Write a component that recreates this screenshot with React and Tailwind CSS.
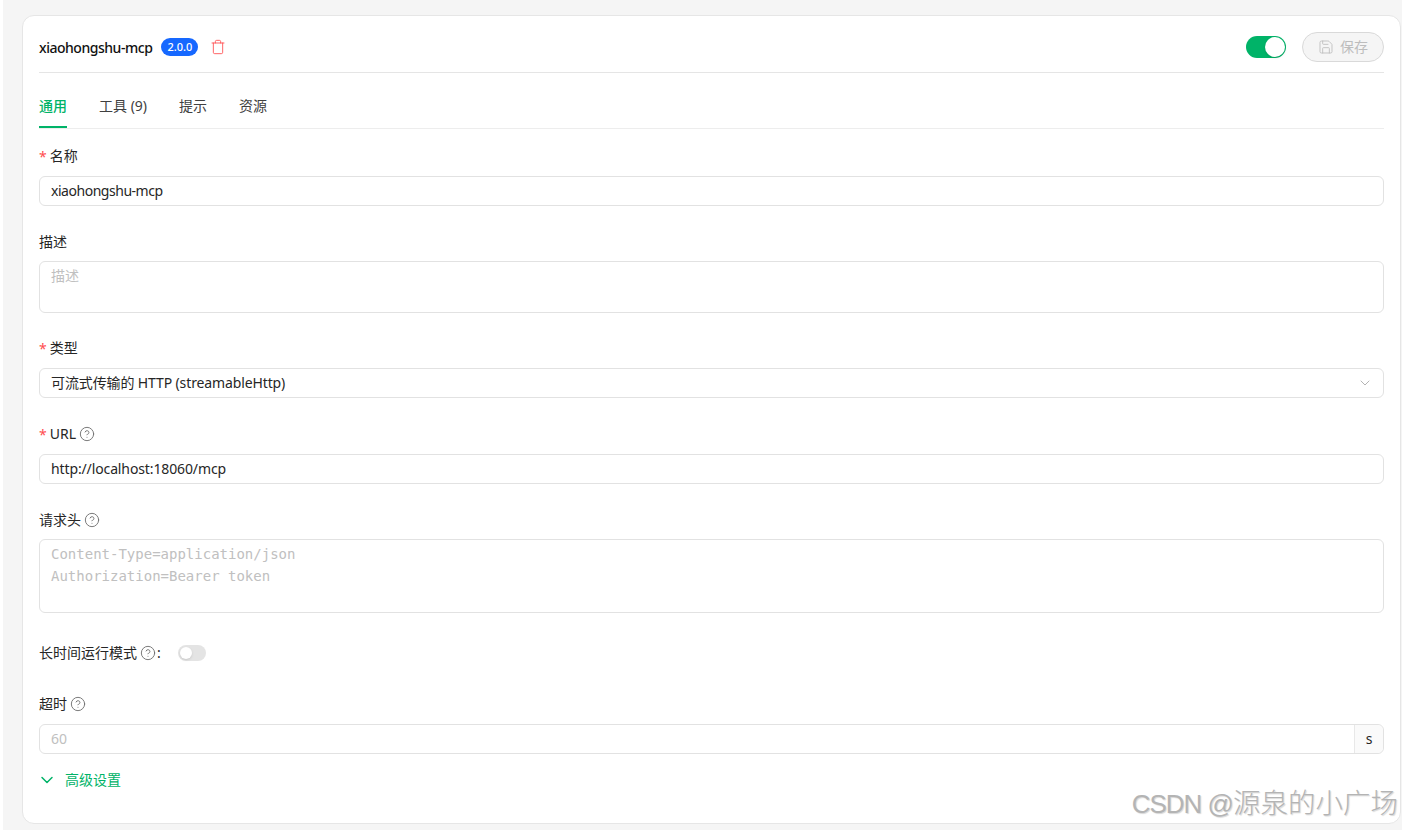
import { ChevronDown, CircleHelp, Save, Trash } from 'lucide-react';

const sans = 'font-["Noto_Sans","Noto_Sans_CJK_SC",sans-serif]';
const mono = 'font-["DejaVu_Sans_Mono","Noto_Sans_CJK_SC",monospace]';

function Help() {
  return <CircleHelp size={16} strokeWidth={1.4} className="text-[#707070]" />;
}

function Label({ required, help, children }) {
  return (
    <div className="flex h-[22px] items-center gap-[3px] text-[14px] text-[#262626]">
      {required && <span className="text-[14px] text-[#ff4d4f]">*</span>}
      <span className="pb-[2px]">{children}</span>
      {help && <Help />}
    </div>
  );
}

function Field({ className = '', children }) {
  return (
    <div className={`flex items-center rounded-[6px] border border-[#e2e2e2] bg-white px-[11px] pb-[2px] text-[14px] text-[#262626] ${className}`}>
      {children}
    </div>
  );
}

export default function App() {
  return (
    <div className={`${sans} h-[830px] w-[1402px] overflow-hidden border-l-[3px] border-white bg-[#f5f5f5] pl-[19px] pr-px pt-[15px]`}>
      <div className="relative h-[809px] rounded-[12px] border border-[#e6e6e6] bg-white px-[16px]">
        <div className="flex h-[57px] items-center justify-between border-b border-[#e5e5e5] pt-[6px]">
          <div className="flex items-center">
            <span className="text-[14px] font-medium tracking-[-0.47px] text-[#111]">xiaohongshu-mcp</span>
            <span className="ml-[9px] flex h-[18px] w-[37px] items-center justify-center rounded-full bg-[#1668ff] text-[11px] font-medium text-white">
              2.0.0
            </span>
            <Trash size={16} strokeWidth={1.3} className="ml-[12px] text-[#ff4d4f]" />
          </div>
          <div className="flex items-center">
            <div className="flex h-[22px] w-[40px] items-center justify-end rounded-full bg-[#00b368] pr-[1px]">
              <div className="h-[20px] w-[20px] rounded-full bg-white shadow-sm" />
            </div>
            <div className="ml-[16px] flex h-[30px] w-[82px] items-center justify-center gap-[6px] rounded-full border border-[#d9d9d9] bg-[#f5f5f5] text-[14px] text-[#bdbdbd]">
              <Save size={16} strokeWidth={1.3} />
              <span className="pb-[2px]">保存</span>
            </div>
          </div>
        </div>

        <div className="flex h-[56px] gap-[32px] border-b border-[#ededed] pt-[11px] text-[14px] text-[#404040]">
          <div className="flex items-center border-b-2 border-[#00b368] font-medium text-[#00b368]">通用</div>
          <div className="flex items-center pb-[2px]">工具 (9)</div>
          <div className="flex items-center pb-[2px]">提示</div>
          <div className="flex items-center pb-[2px]">资源</div>
        </div>

        <div className="pt-[16px]">
          <Label required>名称</Label>
          <Field className="mt-[9px] h-[30px] tracking-[-0.47px]">xiaohongshu-mcp</Field>

          <div className="mt-[25px]"><Label>描述</Label></div>
          <Field className="mt-[8px] h-[52px] items-start pt-[3px] text-[#c0c0c0]">描述</Field>

          <div className="mt-[24px]"><Label required>类型</Label></div>
          <Field className="mt-[9px] h-[30px] justify-between">
            <span className="tracking-[-0.12px]">可流式传输的 HTTP (streamableHttp)</span>
            <ChevronDown size={16} strokeWidth={1.3} className="mt-[2px] translate-x-px text-[#a8a8a8]" />
          </Field>

          <div className="mt-[25px]"><Label required help>URL</Label></div>
          <Field className="mt-[9px] h-[30px] tracking-[-0.12px]">http://localhost:18060/mcp</Field>

          <div className="mt-[25px]"><Label help>请求头</Label></div>
          <div className={`${mono} mt-[8px] h-[74px] rounded-[6px] border border-[#e2e2e2] px-[11px] pt-[3px] text-[14px] leading-[22px] text-[#c0c0c0]`}>
            <div>Content-Type=application/json</div>
            <div>Authorization=Bearer token</div>
          </div>

          <div className="mt-[29px] flex h-[22px] items-center text-[14px] text-[#262626]">
            <span className="pb-[2px]">长时间运行模式</span>
            <span className="ml-[3px]"><Help /></span>
            <span className="ml-px pb-[2px]">:</span>
            <div className="ml-[17px] flex h-[16px] w-[28px] items-center rounded-full bg-[#e4e4e4] pl-[2px]">
              <div className="h-[12px] w-[12px] rounded-full bg-white shadow-sm" />
            </div>
          </div>

          <div className="mt-[29px]"><Label help>超时</Label></div>
          <div className="mt-[9px] flex h-[30px] rounded-[6px] border border-[#e2e2e2] pb-[2px] text-[14px]">
            <div className="flex flex-1 items-center px-[11px] text-[#c0c0c0]">60</div>
            <div className="-mb-[2px] flex w-[29px] items-center justify-center rounded-r-[6px] border-l border-[#e8e8e8] bg-[#fafafa] pb-[2px] text-[#262626]">s</div>
          </div>

          <div className="mt-[15px] flex h-[22px] items-center gap-[8px] text-[14px] text-[#00b368]">
            <ChevronDown size={20} strokeWidth={1.8} className="-ml-[2px]" />
            <span className="pb-[2px]">高级设置</span>
          </div>
        </div>

        <div className="absolute bottom-[1px] right-[2px] flex items-baseline leading-[36px] text-[#b4b4b4] [text-shadow:1px_1px_1px_#d8d8d8] font-['Liberation_Sans','Noto_Sans_CJK_SC',sans-serif]">
          <span className="whitespace-pre text-[26px] tracking-[-1px]">CSDN @</span>
          <span className="font-['Noto_Sans_CJK_SC'] text-[27.5px] font-light">源泉的小广场</span>
        </div>
      </div>
    </div>
  );
}
